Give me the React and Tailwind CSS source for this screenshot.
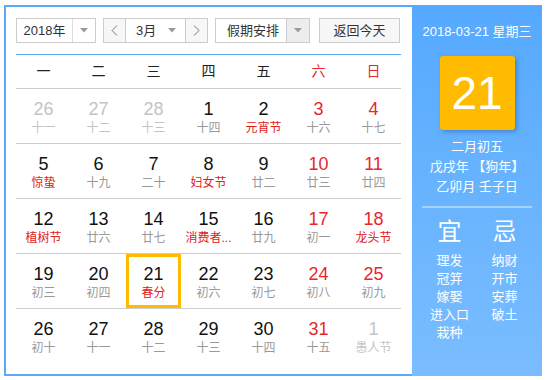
import React from 'react';

const WEEKDAYS = ['一', '二', '三', '四', '五', '六', '日'];

// [day, lunar, flags]  o = other month, f = festival, w = weekend, s = selected
const WEEKS = [
  [[26, '十一', 'o'], [27, '十二', 'o'], [28, '十三', 'o'], [1, '十四', ''], [2, '元宵节', 'f'], [3, '十六', 'w'], [4, '十七', 'w']],
  [[5, '惊蛰', 'f'], [6, '十九', ''], [7, '二十', ''], [8, '妇女节', 'f'], [9, '廿二', ''], [10, '廿三', 'w'], [11, '廿四', 'w']],
  [[12, '植树节', 'f'], [13, '廿六', ''], [14, '廿七', ''], [15, '消费者...', 'f'], [16, '廿九', ''], [17, '初一', 'w'], [18, '龙头节', 'wf']],
  [[19, '初三', ''], [20, '初四', ''], [21, '春分', 'fs'], [22, '初六', ''], [23, '初七', ''], [24, '初八', 'w'], [25, '初九', 'w']],
  [[26, '初十', ''], [27, '十一', ''], [28, '十二', ''], [29, '十三', ''], [30, '十四', ''], [31, '十五', 'w'], [1, '愚人节', 'o']],
];

const YI = ['理发', '冠笄', '嫁娶', '进入口', '栽种'];
const JI = ['纳财', '开市', '安葬', '破土'];

function Caret() {
  return (
    <svg width="8" height="5" viewBox="0 0 8 5">
      <path d="M0 0 L8 0 L4 4.5 Z" fill="#9a9a9a" />
    </svg>
  );
}

function Chevron({ dir }) {
  return (
    <svg width="7" height="11" viewBox="0 0 7 11">
      <path
        d={dir === 'left' ? 'M6 0.5 L1 5.5 L6 10.5' : 'M1 0.5 L6 5.5 L1 10.5'}
        fill="none"
        stroke="#777"
        strokeWidth="1"
      />
    </svg>
  );
}

function DayCell({ day, lunar, flags }) {
  const other = flags.includes('o');
  const fest = flags.includes('f');
  const weekend = flags.includes('w');
  const selected = flags.includes('s');

  const numColor = other ? 'text-[#c4c4c4]' : weekend ? 'text-[#e8262d]' : 'text-[#111]';
  const lunarColor = other ? 'text-[#c4c4c4]' : fest ? 'text-[#e02020]' : 'text-[#999]';

  return (
    <div
      className={`flex h-[54px] w-[55px] flex-col items-center ${
        selected ? 'border-[3px] border-[#ffbb00] pt-[7px]' : 'pt-[10px]'
      }`}
    >
      <span className={`text-[18px] leading-[20px] ${numColor}`}>{day}</span>
      <span className={`mt-[1px] whitespace-nowrap text-[12px] leading-[16px] ${lunarColor}`}>{lunar}</span>
    </div>
  );
}

export default function App() {
  return (
    <div
      className="h-[380px] w-[546px] bg-white pl-[4px] pt-[5px]"
      style={{ fontFamily: '"Liberation Sans", "Noto Sans CJK SC", sans-serif' }}
    >
      <div className="flex h-[371px] w-[538px]">
        {/* Calendar */}
        <div className="w-[408px] border-2 border-r-0 border-[#5aa9fc] pl-[10px] pt-[11px]">
          <div className="flex h-[25px] items-stretch text-[13px] text-[#333]">
            <div className="flex w-[80px] border border-[#ccc] bg-white">
              <span className="flex w-[55px] items-center justify-center leading-none">2018年</span>
              <span className="flex flex-1 items-center justify-center border-l border-[#ddd]">
                <Caret />
              </span>
            </div>

            <div className="ml-[7px] flex w-[105px] border border-[#ccc] bg-white">
              <span className="flex w-[22px] items-center justify-center border-r border-[#ccc] bg-[#f7f7f7]">
                <Chevron dir="left" />
              </span>
              <span className="flex flex-1 items-center pl-[10px] leading-none">
                3月
                <span className="ml-auto mr-[9px] flex">
                  <Caret />
                </span>
              </span>
              <span className="flex w-[22px] items-center justify-center border-l border-[#ccc] bg-[#f7f7f7]">
                <Chevron dir="right" />
              </span>
            </div>

            <div className="ml-[7px] flex w-[95px] border border-[#ccc] bg-white">
              <span className="flex w-[70px] items-center pl-[11px] leading-none">假期安排</span>
              <span className="flex flex-1 items-center justify-center border-l border-[#ccc] bg-[#ededed]">
                <Caret />
              </span>
            </div>

            <div className="ml-[9px] flex w-[81px] items-center justify-center border border-[#ccc] bg-[#f7f7f7] leading-none">
              返回今天
            </div>
          </div>

          <div className="mt-[11px] w-[385px] border-t border-[#5aa9fc]">
            <div className="grid h-[34px] grid-cols-7 border-b border-[#ccc] text-[14px]">
              {WEEKDAYS.map((w, i) => (
                <div
                  key={w}
                  className={`flex items-center justify-center ${i >= 5 ? 'text-[#e8262d]' : 'text-[#222]'}`}
                >
                  {w}
                </div>
              ))}
            </div>

            {WEEKS.map((week, r) => (
              <div
                key={r}
                className={`grid grid-cols-7 ${r < WEEKS.length - 1 ? 'border-b border-[#ccc]' : ''}`}
              >
                {week.map(([day, lunar, flags], c) => (
                  <DayCell key={c} day={day} lunar={lunar} flags={flags} />
                ))}
              </div>
            ))}
          </div>
        </div>

        {/* Side panel */}
        <div className="flex w-[130px] flex-col items-center bg-gradient-to-b from-[#55a9fe] to-[#7abdff] pt-[17px] text-white">
          <div className="text-[13px] leading-[20px]">2018-03-21 星期三</div>

          <div className="mt-[14px] flex h-[74px] w-[75px] items-center justify-center rounded-[3px] bg-[#ffbb00] shadow-[2px_2px_4px_rgba(0,60,140,0.35)]">
            <span className="text-[46px] leading-none">21</span>
          </div>

          <div className="mt-[7px] flex flex-col items-center text-[13px] leading-[20px]">
            <span>二月初五</span>
            <span className="whitespace-pre">戊戌年 【狗年】</span>
            <span>乙卯月 壬子日</span>
          </div>

          <div className="mt-[9px] h-[2px] w-[110px] bg-white/40" />

          <div className="mt-[10px] grid w-[110px] grid-cols-2">
            <div className="flex flex-col items-center">
              <span className="text-[24px] leading-[28px]">宜</span>
              <div className="mt-[6px] flex flex-col items-center text-[13px] leading-[18px]">
                {YI.map((t) => (
                  <span key={t}>{t}</span>
                ))}
              </div>
            </div>
            <div className="flex flex-col items-center">
              <span className="text-[24px] leading-[28px]">忌</span>
              <div className="mt-[6px] flex flex-col items-center text-[13px] leading-[18px]">
                {JI.map((t) => (
                  <span key={t}>{t}</span>
                ))}
              </div>
            </div>
          </div>
        </div>
      </div>
    </div>
  );
}
